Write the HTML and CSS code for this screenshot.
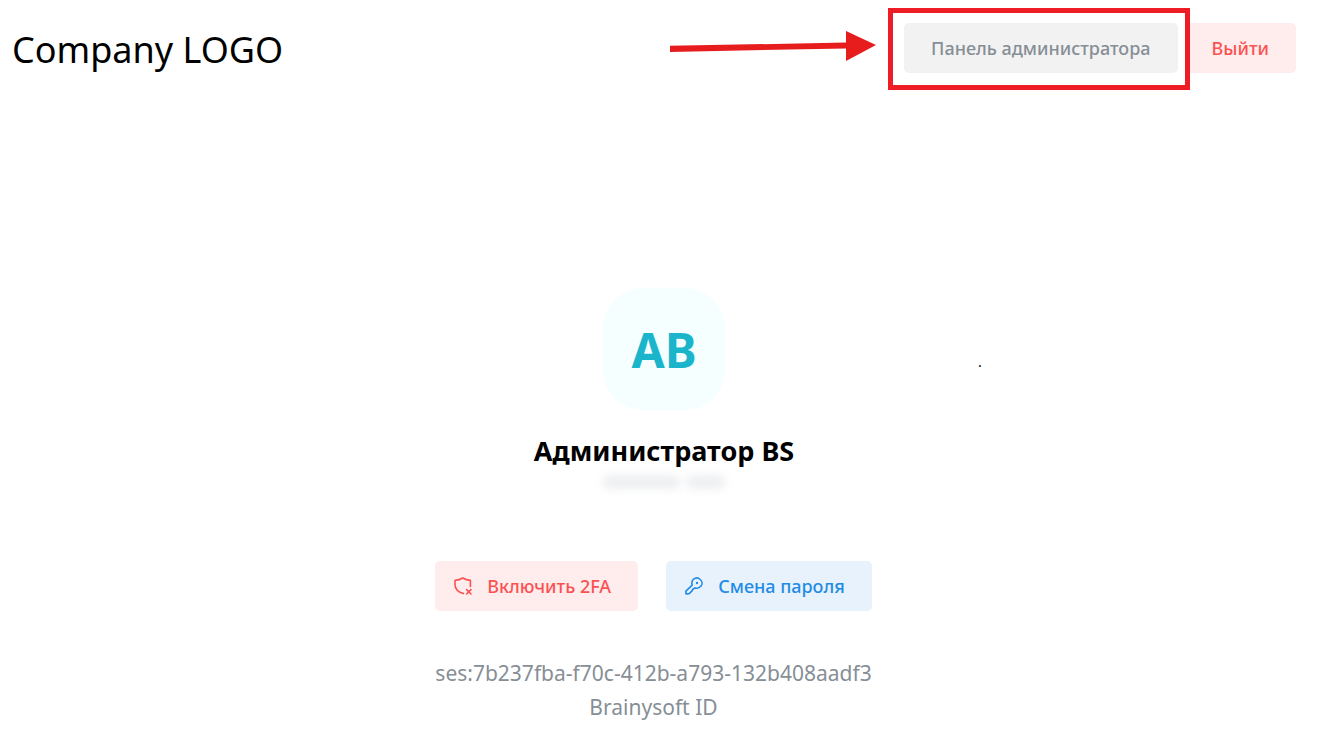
FILE: index.html
```html
<!DOCTYPE html>
<html lang="ru">
<head>
    <meta charset="UTF-8">
    <meta name="viewport" content="width=device-width, initial-scale=1.0">
    <title>Brainysoft ID</title>
    <link rel="stylesheet" href="styles.css">
</head>
<body>
    <header class="header">
        <a href="#" class="logo">Company LOGO</a>
        <nav class="header-buttons">
            <div class="highlight">
                <button type="button" class="button button-gray">Панель администратора</button>
                <svg class="arrow" width="208" height="32" viewBox="0 0 208 32" aria-hidden="true">
                    <path d="M0 15.8 L176 12.6 V1 L206 15 L176 31 V18.4 L0 22 Z" fill="#e71d1d"/>
                </svg>
            </div>
            <button type="button" class="button button-red">Выйти</button>
        </nav>
    </header>

    <main class="profile">
        <div class="avatar">AB</div>
        <h1 class="name">Администратор BS</h1>
        <div class="hidden-login">
            <span class="smudge smudge-long"></span>
            <span class="smudge"></span>
        </div>
        <span class="dot">.</span>

        <div class="details">
            <div class="actions">
                <button type="button" class="button button-icon button-red">
                    <svg class="icon" viewBox="0 0 18 18" aria-hidden="true">
                        <path d="M9.4 16.6 C4 15 1 11.4 1 7.2 V3.4 C4.3 3.2 6.6 2.4 8.8 1 C11.1 2.4 13.3 3.2 16.4 3.4 V9.6"/>
                        <path d="M12.6 12.6 L17 17 M17 12.6 L12.6 17"/>
                    </svg>
                    Включить 2FA
                </button>
                <button type="button" class="button button-icon button-blue">
                    <svg class="icon" viewBox="0 0 18 18" aria-hidden="true">
                        <path d="M7.2 8.2 C6.3 5.6 7.2 3.4 8.6 2.2 C10.6 0.6 13.3 0.7 15.2 2.5 C17.3 4.4 17.6 7.2 16 9.1 C14.6 10.8 12.2 11.7 9.9 10.9 L8.3 12.2 L7.5 12.3 L7.3 13.7 L3.9 16.8 L1 16.9 L0.9 14.1 Z"/>
                        <circle class="icon-dot" cx="12" cy="6" r="1.2"/>
                    </svg>
                    Смена пароля
                </button>
            </div>
            <p class="session">ses:7b237fba-f70c-412b-a793-132b408aadf3<br>Brainysoft ID</p>
        </div>
    </main>
</body>
</html>
```
FILE: styles.css
```css
* {
    box-sizing: border-box;
}

body {
    margin: 0;
    font-family: "Noto Sans", "Open Sans", sans-serif;
    background-color: #fff;
    color: #000;
}

.header {
    display: flex;
    justify-content: space-between;
    align-items: flex-start;
    padding: 23px 39px 23px 12px;
}

.logo {
    color: #000;
    font-size: 36px;
    line-height: 54px;
    text-decoration: none;
}

.header-buttons {
    display: flex;
    gap: 7px;
}

.button {
    height: 50px;
    padding: 0 27px;
    border: none;
    border-radius: 5px;
    font-family: inherit;
    font-size: 18px;
    font-weight: 500;
    cursor: pointer;
}

.button-gray {
    background-color: #f2f2f2;
    color: #868e96;
}

.button-red {
    background-color: #ffecec;
    color: #fa5252;
}

.button-blue {
    background-color: #e7f2fc;
    color: #228be6;
}

/* red frame around the admin button, with the arrow pointing at it */
.highlight {
    position: relative;
}

.highlight::after {
    content: "";
    position: absolute;
    inset: -15px -12px -17px -16px;
    border: 5px solid #ee1c24;
    pointer-events: none;
}

.arrow {
    position: absolute;
    top: 7px;
    right: 100%;
    margin-right: 26px;
}

.profile {
    position: relative;
    display: flex;
    flex-direction: column;
    align-items: center;
    padding: 188px 7px 20px 0;
}

.avatar {
    display: flex;
    justify-content: center;
    align-items: center;
    width: 122px;
    height: 122px;
    border-radius: 40px;
    background-color: #f5ffff;
    color: #1ab4cb;
    font-size: 48px;
    font-weight: bold;
}

.name {
    margin: 21px 0 0;
    font-size: 27px;
    line-height: 40px;
}

.hidden-login {
    display: flex;
    gap: 6px;
    margin-top: 4px;
}

.smudge {
    width: 40px;
    height: 14px;
    border-radius: 7px;
    background-color: #eeeff1;
    filter: blur(4px);
}

.smudge-long {
    width: 78px;
}

.dot {
    position: absolute;
    top: 252px;
    left: 978px;
    font-size: 14px;
}

.details {
    display: flex;
    flex-direction: column;
    align-items: center;
    margin-top: 72px;
    padding-right: 21px;
}

.actions {
    display: flex;
    gap: 28px;
}

.button-icon {
    display: flex;
    align-items: center;
    gap: 15px;
    padding: 0 27px 0 19px;
}

.icon {
    width: 18px;
    height: 18px;
    fill: none;
    stroke: currentColor;
    stroke-width: 1.6;
    stroke-linecap: round;
    stroke-linejoin: round;
}

.icon-dot {
    fill: currentColor;
    stroke: none;
}

.session {
    margin: 45px 0 0;
    color: #868e96;
    font-size: 21px;
    line-height: 34px;
    text-align: center;
}
```
